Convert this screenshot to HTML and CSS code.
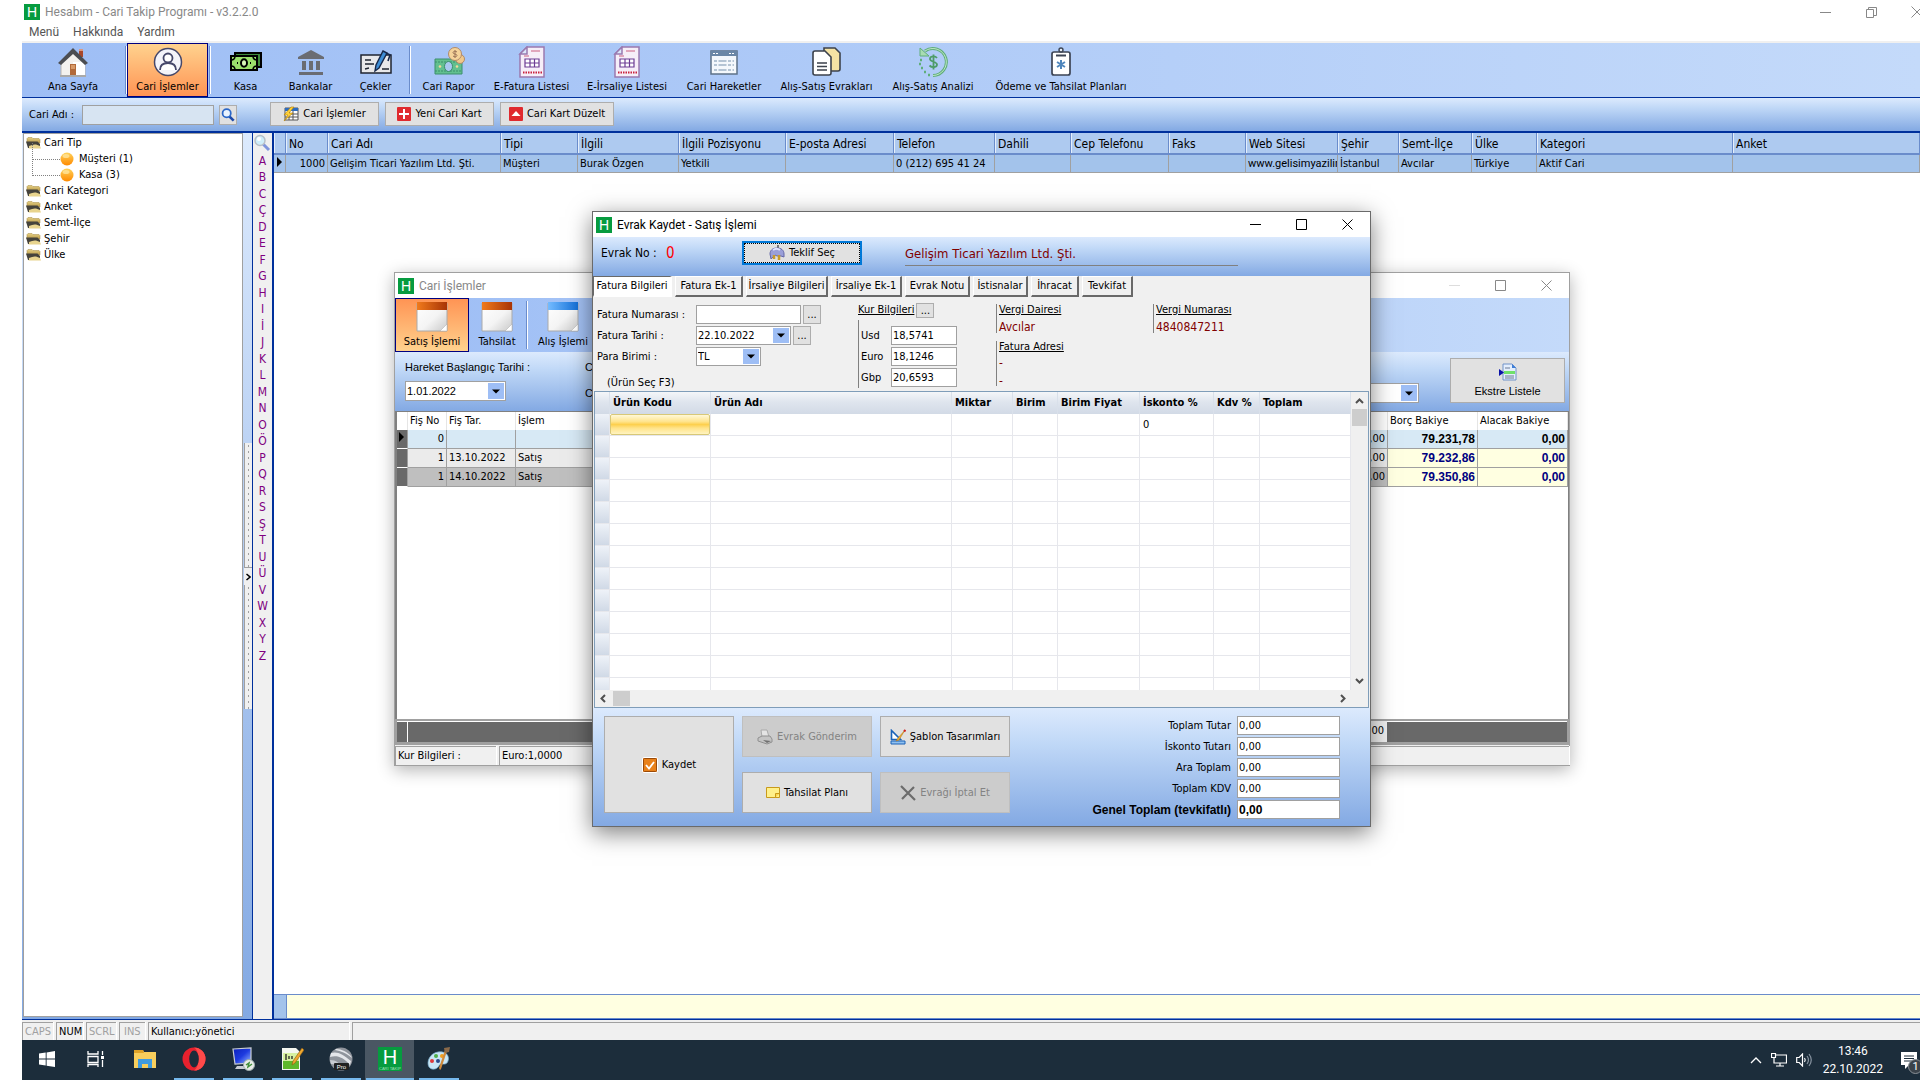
FILE: index.html
```html
<!DOCTYPE html>
<html lang="tr">
<head>
<meta charset="utf-8">
<title>Hesabım - Cari Takip Programı - v3.2.2.0</title>
<link rel="stylesheet" href="styles.css">
</head>
<body>
<svg class="defs" aria-hidden="true">
  <defs>
    <linearGradient id="sheet" x1="0" y1="0" x2="1" y2="1"><stop offset="0" stop-color="#fff"/><stop offset=".55" stop-color="#f4f4f4"/><stop offset="1" stop-color="#c9c9c9"/></linearGradient>
    <linearGradient id="orangeTop"><stop offset="0" stop-color="#f07a1c"/><stop offset="1" stop-color="#a83406"/></linearGradient>
    <linearGradient id="blueTop"><stop offset="0" stop-color="#74bbff"/><stop offset="1" stop-color="#1470d8"/></linearGradient>
    <linearGradient id="ball" x1="0" y1="0" x2="0" y2="1"><stop offset="0" stop-color="#ffd25a"/><stop offset="1" stop-color="#ff8a00"/></linearGradient>
    <linearGradient id="screen" x1="0" y1="0" x2="1" y2="1"><stop offset="0" stop-color="#0a1fb8"/><stop offset=".5" stop-color="#1d3be0"/><stop offset="1" stop-color="#9fc0ff"/></linearGradient>
    <linearGradient id="folderLid" x1="0" y1="0" x2="0" y2="1"><stop offset="0" stop-color="#e6cf83"/><stop offset="1" stop-color="#b89a4a"/></linearGradient>
  </defs>
  <symbol id="i-folder" viewBox="0 0 15 12"><path d="M1 1.500L2 .5h4l1 1h6l1 1V6H1z" fill="url(#folderLid)" stroke="#a58a45" stroke-width=".5"/><path d="M0 4.500h11.500L14 7v4H2z" fill="#45433c"/><path d="M3 11V9q4-2 7-1.500L14 9l1 2.500H2z" fill="#e8d48e"/></symbol>
  <symbol id="i-ball" viewBox="0 0 14 14"><circle cx="7" cy="7" r="6.500" fill="url(#ball)"/><ellipse cx="6" cy="4" rx="3.500" ry="2" fill="#ffe9a8" opacity=".7"/></symbol>
  <symbol id="i-doc" viewBox="0 0 28 32"><path d="M9 1h17v30H2V8z" fill="#f6eef8" stroke="#9a7ab0" stroke-width="1.500"/><path d="M9 1v7H2z" fill="#dbe8fa" stroke="#9a7ab0" stroke-width="1.500"/><path d="M13 5h9M6 10h5" stroke="#d98fa8" stroke-width="1.500"/><path d="M7 13h14v8H7zM7 17h14M12 13v8M16.500 13v8" fill="#fff" stroke="#6d3c94" stroke-width="1.200"/><path d="M5 26.500h19" stroke="#c9203c" stroke-width="2" stroke-dasharray="1.500 1"/></symbol>
  <symbol id="i-search" viewBox="0 0 16 16"><path d="M9.500 9.500l5 5" stroke="#1d49a8" stroke-width="3"/><circle cx="6.500" cy="6" r="4.700" fill="#eaf4ff" stroke="#2c68c8" stroke-width="2"/></symbol>
  <symbol id="i-caret" viewBox="0 0 8 5"><path d="M0 .5h8L4 4.500z" fill="#000"/></symbol>
</svg>

<div class="app">
  <header class="titlebar">
    <span class="logo">H</span>
    <h1 class="titlebar-text">Hesabım - Cari Takip Programı - v3.2.2.0</h1>
    <div class="win-buttons main-buttons">
      <button aria-label="Simge durumuna küçült"><svg width="11" height="11"><path d="M0 5.500h11" stroke="#888"/></svg></button>
      <button aria-label="Önceki boyut"><svg width="11" height="11"><path d="M.5 2.500h7v8h-7zM2.500 2.500v-2h8v8h-3" fill="none" stroke="#888"/></svg></button>
      <button aria-label="Kapat"><svg width="12" height="12"><path d="M.5.5l11 11M11.500.5l-11 11" stroke="#888"/></svg></button>
    </div>
  </header>
  <nav class="menu"><a href="#">Menü</a><a href="#">Hakkında</a><a href="#">Yardım</a></nav>

  <div class="toolbar">
    <button class="tool"><svg width="32" height="32" viewBox="0 0 32 32"><path d="M22 3h4v8h-4z" fill="#a8482c"/><path d="M22 3h4v2h-4z" fill="#d99a84"/><path d="M4 16L16 5l12 11v14H4z" fill="#f3f1ee" stroke="#b9b4ad"/><path d="M16 16h12v14H16z" fill="#fff"/><path d="M16 2L1 17l3 2L16 8l12 11 3-2z" fill="#4b4d52"/><path d="M13 18h6v12h-6z" fill="#b26a3a"/><path d="M14 19h4v4h-4z" fill="#d89a68"/><path d="M3 30h26" stroke="#a9a9a9" stroke-width="2"/></svg>Ana Sayfa</button>
    <i class="sep"></i>
    <button class="tool active"><svg width="32" height="32" viewBox="0 0 32 32"><circle cx="16" cy="16" r="13.500" fill="#f4f4fa" stroke="#46486a" stroke-width="1.500"/><circle cx="16" cy="12" r="4.500" fill="#fff" stroke="#46486a" stroke-width="1.800"/><path d="M8 24c0-5 3-7 8-7s8 2 8 7" fill="#fff" stroke="#46486a" stroke-width="1.800"/></svg>Cari İşlemler</button>
    <i class="sep"></i>
    <button class="tool"><svg width="32" height="32" viewBox="0 0 32 32"><path d="M5 7h26v14H5z" fill="#3f8a3c" stroke="#000" stroke-width="2"/><path d="M1 10h26v14H1z" fill="#9be06b" stroke="#000" stroke-width="2"/><path d="M1 14c3 0 4-2 4-4M27 14c-3 0-4-2-4-4M1 20c3 0 4 2 4 4M27 20c-3 0-4 2-4 4" fill="none" stroke="#000" stroke-width="1.500"/><ellipse cx="14" cy="17" rx="3" ry="3.800" fill="#d9f7b8" stroke="#000" stroke-width="2"/><path d="M7 17h1M20 17h1" stroke="#000" stroke-width="2"/></svg>Kasa</button>
    <button class="tool"><svg width="32" height="32" viewBox="0 0 32 32"><path d="M16 4l13 7v2H3v-2zM7 15h4v9H7zM14 15h4v9h-4zM21 15h4v9h-4zM4 26h24v3H4z" fill="#6a6c72"/></svg>Bankalar</button>
    <button class="tool"><svg width="34" height="32" viewBox="0 0 34 32"><path d="M2 9h30v18H2z" fill="#e8e8ea" stroke="#1f2430" stroke-width="1.500"/><path d="M6 14h6M6 18h9M23 23h7M6 23l4-1" stroke="#1f2430" stroke-width="1.300"/><path d="M24 5l4 2-8 15-4 3 1-6z" fill="#3f8ed6" stroke="#17284a" stroke-width="1.400"/><path d="M27 7l4 2-2 6" fill="none" stroke="#17284a" stroke-width="1.600"/></svg>Çekler</button>
    <i class="sep"></i>
    <button class="tool"><svg width="32" height="32" viewBox="0 0 32 32"><path d="M2 13h27v15H2z" fill="#62c08f" stroke="#3c8f6c"/><path d="M2 16h27M2 25h27" stroke="#3c8f6c" stroke-dasharray="2 1"/><ellipse cx="15.500" cy="20.500" rx="4" ry="5" fill="#a9c9f0" stroke="#3c8f6c"/><circle cx="7" cy="20.500" r="1.300" fill="#f2d79b"/><circle cx="24" cy="20.500" r="1.300" fill="#f2d79b"/><circle cx="27" cy="13" r="4.500" fill="#f0c88a" stroke="#b08a6a"/><circle cx="22" cy="8" r="6.500" fill="#f5d39a" stroke="#b08a6a"/><path d="M24 6c-1-1-4-1-4 .7s4 1 4 2.700-3 1.700-4 .600M22 4v8" fill="none" stroke="#9c7458"/></svg>Cari Rapor</button>
    <button class="tool"><svg width="28" height="32"><use href="#i-doc"/></svg>E-Fatura Listesi</button>
    <button class="tool"><svg width="28" height="32"><use href="#i-doc"/></svg>E-İrsaliye Listesi</button>
    <button class="tool"><svg width="30" height="32" viewBox="0 0 30 32"><path d="M2 5h26v23H2z" fill="#f4f8fc" stroke="#5d7288" stroke-width="1.500"/><path d="M2 5h26v5H2z" fill="#6b87a6"/><path d="M4 7.500h6M20 7.500h6" stroke="#fff" stroke-dasharray="2 1"/><path d="M5 15h20M5 19h20M5 24h20" stroke="#9fb2c6" stroke-width="1.400" stroke-dasharray="3 1.500 8 1.500"/></svg>Cari Hareketler</button>
    <button class="tool"><svg width="30" height="32" viewBox="0 0 30 32"><path d="M12 2h11l5 5v16q0 2-2 2H12z" fill="#f5e3a4" stroke="#3c424c" stroke-width="1.600"/><path d="M3 5h10l6 6v16q0 2-2 2H3q-2 0-2-2V7q0-2 2-2z" fill="#fff" stroke="#3c424c" stroke-width="1.600"/><path d="M5 17h10M5 20.500h10M5 24h10" stroke="#3c424c" stroke-width="1.500"/></svg>Alış-Satış Evrakları</button>
    <button class="tool"><svg width="32" height="32" viewBox="0 0 32 32"><path d="M8 5A13.500 13.500 0 1 1 16 29.500" fill="none" stroke="#5fae7a" stroke-width="3"/><path d="M8 5A13.500 13.500 0 1 1 16 29.500" fill="none" stroke="#bfe6c6" stroke-width="1"/><path d="M3 2v8h9z" fill="#a8dcb2" stroke="#5fae7a"/><path d="M3 14h2M2 18h2M4 22h2M7 26h2M11 29h2" stroke="#5fae7a" stroke-width="2.500"/><path d="M20 12c-2-2.500-7-2-7 1s7 2.500 7 5.500-5 3.500-7.500 1M16.500 8.500v15" fill="none" stroke="#4e9c69" stroke-width="1.800"/></svg>Alış-Satış Analizi</button>
    <button class="tool"><svg width="24" height="32" viewBox="0 0 24 32"><path d="M5 6h14q2 0 2 2v19q0 2-2 2H5q-2 0-2-2V8q0-2 2-2z" fill="#fff" stroke="#3c4454" stroke-width="1.700"/><path d="M7 9.500h10" stroke="#3c4454" stroke-width="2"/><circle cx="12" cy="4" r="2" fill="#e8eef6" stroke="#3c4454" stroke-width="1.400"/><path d="M12 14v9M8 16l8 5M16 16l-8 5" stroke="#4f86bd" stroke-width="2"/></svg>Ödeme ve Tahsilat Planları</button>
  </div>

  <div class="actionbar">
    <label for="cari-adi">Cari Adı :</label>
    <input id="cari-adi" class="search-box" type="text">
    <button class="btn search-btn" aria-label="Ara"><svg width="14" height="16"><use href="#i-search"/></svg></button>
    <div class="action-group">
      <button class="btn act-wide"><svg width="16" height="16" viewBox="0 0 16 16"><path d="M2 2h13v12H2z" fill="#fff" stroke="#555"/><path d="M2 2h13v3H2z" fill="#2c6cc0"/><path d="M6 5v9M10 5v9M2 8h13M2 11h13" stroke="#555"/><path d="M8 1L1 9h4l-4 6 9-8H6l5-6z" fill="#ffd23a" stroke="#b07a00" stroke-width=".600"/></svg>Cari İşlemler</button>
      <button class="btn act-wide"><svg width="14" height="14" viewBox="0 0 14 14"><rect width="14" height="14" rx="1" fill="#e02a2e"/><path d="M7 2v10M2 7h10" stroke="#fff" stroke-width="2"/></svg>Yeni Cari Kart</button>
      <button class="btn act-edit"><svg width="14" height="14" viewBox="0 0 14 14"><rect width="14" height="14" rx="1" fill="#e02a2e"/><path d="M7 4l4.500 5h-9z" fill="#fff"/></svg>Cari Kart Düzelt</button>
    </div>
  </div>

  <main class="workspace">
    <aside class="tree-wrap">
      <ul class="tree">
        <li><svg width="15" height="12"><use href="#i-folder"/></svg>Cari Tip
          <ul>
            <li><svg width="14" height="14"><use href="#i-ball"/></svg>Müşteri (1)</li>
            <li><svg width="14" height="14"><use href="#i-ball"/></svg>Kasa (3)</li>
          </ul>
        </li>
        <li><svg width="15" height="12"><use href="#i-folder"/></svg>Cari Kategori</li>
        <li><svg width="15" height="12"><use href="#i-folder"/></svg>Anket</li>
        <li><svg width="15" height="12"><use href="#i-folder"/></svg>Semt-İlçe</li>
        <li><svg width="15" height="12"><use href="#i-folder"/></svg>Şehir</li>
        <li><svg width="15" height="12"><use href="#i-folder"/></svg>Ülke</li>
      </ul>
      <div class="splitter"><i class="dots"></i><button class="split-btn" aria-label="Daralt"><svg width="5" height="8"><path d="M.5 1L4 4 .5 7" fill="none" stroke="#000" stroke-width="1.500"/></svg></button><i class="dots"></i></div>
    </aside>
    <nav class="alphabet">
      <svg class="alpha-search" width="18" height="18" viewBox="0 0 18 18"><path d="M10 10l6 6" stroke="#7f95dc" stroke-width="3"/><circle cx="7" cy="6.500" r="5" fill="#cfeefa" stroke="#b8c0c8" stroke-width="1.500"/><circle cx="6" cy="5" r="2" fill="#fff"/></svg>
      <div class="letters"><a href="#">A</a><a href="#">B</a><a href="#">C</a><a href="#">Ç</a><a href="#">D</a><a href="#">E</a><a href="#">F</a><a href="#">G</a><a href="#">H</a><a href="#">I</a><a href="#">İ</a><a href="#">J</a><a href="#">K</a><a href="#">L</a><a href="#">M</a><a href="#">N</a><a href="#">O</a><a href="#">Ö</a><a href="#">P</a><a href="#">Q</a><a href="#">R</a><a href="#">S</a><a href="#">Ş</a><a href="#">T</a><a href="#">U</a><a href="#">Ü</a><a href="#">V</a><a href="#">W</a><a href="#">X</a><a href="#">Y</a><a href="#">Z</a></div>
    </nav>
    <section class="records">
      <table class="cari-table">
        <colgroup><col class="c-ind"><col class="c-no"><col class="c-adi"><col class="c-tip"><col class="c-ilgili"><col class="c-poz"><col class="c-mail"><col class="c-tel"><col class="c-dahili"><col class="c-cep"><col class="c-faks"><col class="c-web"><col class="c-sehir"><col class="c-semt"><col class="c-ulke"><col class="c-kat"><col></colgroup>
        <thead><tr><th></th><th>No</th><th>Cari Adı</th><th>Tipi</th><th>İlgili</th><th>İlgili Pozisyonu</th><th>E-posta Adresi</th><th>Telefon</th><th>Dahili</th><th>Cep Telefonu</th><th>Faks</th><th>Web Sitesi</th><th>Şehir</th><th>Semt-İlçe</th><th>Ülke</th><th>Kategori</th><th>Anket</th></tr></thead>
        <tbody><tr><td class="ind"><svg width="6" height="10"><path d="M0 0l5 5-5 5z"/></svg></td><td class="num">1000</td><td>Gelişim Ticari Yazılım Ltd. Şti.</td><td>Müşteri</td><td>Burak Özgen</td><td>Yetkili</td><td></td><td>0 (212) 695 41 24</td><td></td><td></td><td></td><td class="web">www.gelisimyazilim</td><td>İstanbul</td><td>Avcılar</td><td>Türkiye</td><td>Aktif Cari</td><td></td></tr></tbody>
      </table>
      <div class="note-row"></div>
    </section>
  </main>

  <footer class="statusbar">
    <span class="st st-caps off">CAPS</span><span class="st st-num">NUM</span><span class="st st-scrl off">SCRL</span><span class="st st-ins off">INS</span><span class="st st-user">Kullanıcı:yönetici</span><span class="st st-rest"></span>
  </footer>
</div>

<section class="window cari-window">
  <header class="win-title"><span class="logo">H</span><h2>Cari İşlemler</h2>
    <div class="win-buttons">
      <button aria-label="Simge durumuna küçült"><svg width="11" height="11"><path d="M0 5.500h11" stroke="#ddd"/></svg></button>
      <button aria-label="Ekranı kapla"><svg width="11" height="11"><path d="M.5.5h10v10H.5z" fill="none" stroke="#888"/></svg></button>
      <button aria-label="Kapat"><svg width="11" height="11"><path d="M.5.5l10 10M10.500.5l-10 10" stroke="#888"/></svg></button>
    </div>
  </header>
  <div class="cari-tools">
    <button class="tool pressed"><svg width="32" height="32" viewBox="0 0 32 32"><path d="M1 2h30v28H1z" fill="url(#sheet)" stroke="#aaa"/><path d="M1 1h30v8H1z" fill="url(#orangeTop)"/><path d="M24 30l7-7v7z" fill="#fff" stroke="#aaa" stroke-width=".5"/></svg>Satış İşlemi</button>
    <button class="tool narrow"><svg width="32" height="32" viewBox="0 0 32 32"><path d="M1 2h30v28H1z" fill="url(#sheet)" stroke="#aaa"/><path d="M1 1h30v8H1z" fill="url(#orangeTop)"/><path d="M24 30l7-7v7z" fill="#fff" stroke="#aaa" stroke-width=".5"/></svg>Tahsilat</button>
    <i class="sep"></i>
    <button class="tool"><svg width="32" height="32" viewBox="0 0 32 32"><path d="M1 2h30v28H1z" fill="url(#sheet)" stroke="#aaa"/><path d="M1 1h30v8H1z" fill="url(#blueTop)"/><path d="M24 30l7-7v7z" fill="#fff" stroke="#aaa" stroke-width=".5"/></svg>Alış İşlemi</button>
  </div>
  <div class="cari-filter">
    <div class="filter-start">
      <label for="baslangic">Hareket Başlangıç Tarihi :</label>
      <span class="combo combo-start"><input id="baslangic" type="text" value="1.01.2022"><button class="drop" aria-label="Takvim"><svg width="8" height="5"><use href="#i-caret"/></svg></button></span>
    </div>
    <div class="filter-mid"><span>C</span><span>C</span></div>
    <span class="combo combo-mid"><select aria-label="Cari"><option></option></select><i class="drop"><svg width="8" height="5"><use href="#i-caret"/></svg></i></span>
    <button class="btn list-btn"><svg width="18" height="18" viewBox="0 0 18 18"><path d="M4 1h9l4 4v12H4z" fill="#e4eefc" stroke="#6f92c8"/><path d="M13 1v4h4z" fill="#3f7fd8"/><path d="M6 5h5M6 13h9M6 15h9" stroke="#6a7a94"/><path d="M5 8h11v3H5z" fill="#6fe06a"/><path d="M0 6v7l5-3.500z" fill="#0a12a8"/></svg>Ekstre Listele</button>
  </div>
  <div class="fis-area">
    <table class="fis-table">
      <colgroup><col class="f-ind"><col class="f-no"><col class="f-tar"><col><col class="f-amt"><col class="f-borc"><col class="f-alacak"></colgroup>
      <thead><tr><th></th><th>Fiş No</th><th>Fiş Tar.</th><th>İşlem</th><th></th><th>Borç Bakiye</th><th>Alacak Bakiye</th></tr></thead>
      <tbody>
        <tr class="r-current"><td class="mark"><svg width="6" height="10"><path d="M0 0l5 5-5 5z"/></svg></td><td class="num">0</td><td></td><td></td><td class="num">,00</td><td class="sum">79.231,78</td><td class="sum">0,00</td></tr>
        <tr class="r-light"><td class="mark"></td><td class="num">1</td><td>13.10.2022</td><td>Satış</td><td class="num">,00</td><td class="sum">79.232,86</td><td class="sum">0,00</td></tr>
        <tr class="r-dark"><td class="mark"></td><td class="num">1</td><td>14.10.2022</td><td>Satış</td><td class="num">,00</td><td class="sum">79.350,86</td><td class="sum">0,00</td></tr>
      </tbody>
    </table>
  </div>
  <div class="fis-footer"><span class="foot-ind"></span><span class="foot-fill"></span><span class="foot-sum">00</span><span class="foot-end"></span></div>
  <footer class="cari-status"><span class="st st-kur">Kur Bilgileri :</span><span class="st st-rest">Euro:1,0000</span></footer>
</section>

<section class="window evrak-window">
  <header class="win-title"><span class="logo">H</span><h2>Evrak Kaydet - Satış İşlemi</h2>
    <div class="win-buttons">
      <button aria-label="Simge durumuna küçült"><svg width="11" height="11"><path d="M0 5.500h11" stroke="#000"/></svg></button>
      <button aria-label="Ekranı kapla"><svg width="11" height="11"><path d="M.5.5h10v10H.5z" fill="none" stroke="#000"/></svg></button>
      <button aria-label="Kapat"><svg width="11" height="11"><path d="M.5.5l10 10M10.500.5l-10 10" stroke="#000"/></svg></button>
    </div>
  </header>
  <div class="evrak-head">
    <span class="evrak-label">Evrak No :</span><span class="evrak-no">0</span>
    <button class="btn teklif"><svg width="16" height="16" viewBox="0 0 16 16"><path d="M9 0v4" stroke="#777" stroke-width="2"/><path d="M1 9c0-4 3-6 7-6s7 2 7 6v3l-3-1H8l-2-1-4 4z" fill="#9a9fd8" stroke="#6468a8"/><path d="M4 5c2-1.500 5-1.500 7 0" stroke="#dfe2ff" stroke-width="2" fill="none"/><path d="M5 10v4M10 10v5" stroke="#c89a2a" stroke-width="2.500"/></svg>Teklif Seç</button>
    <span class="company">Gelişim Ticari Yazılım Ltd. Şti.</span>
  </div>
  <nav class="tabs">
    <button class="tab t-sel">Fatura Bilgileri</button><button class="tab t-ek">Fatura Ek-1</button><button class="tab t-irs">İrsaliye Bilgileri</button><button class="tab t-irsek">İrsaliye Ek-1</button><button class="tab t-not">Evrak Notu</button><button class="tab t-ist">İstisnalar</button><button class="tab t-ihr">İhracat</button><button class="tab t-tev">Tevkifat</button>
  </nav>
  <div class="evrak-form">
    <div class="form-main">
      <div class="row"><label for="fno">Fatura Numarası :</label><input id="fno" class="field fno" type="text"><button class="btn dots-btn" aria-label="Numara seç">...</button></div>
      <div class="row"><label for="ftar">Fatura Tarihi :</label><span class="combo combo-date"><input id="ftar" type="text" value="22.10.2022"><button class="drop" aria-label="Takvim"><svg width="8" height="5"><use href="#i-caret"/></svg></button></span><button class="btn dots-btn" aria-label="Tarih seç">...</button></div>
      <div class="row"><label for="pb">Para Birimi :</label><span class="combo combo-cur"><select id="pb"><option>TL</option></select><i class="drop"><svg width="8" height="5"><use href="#i-caret"/></svg></i></span></div>
      <p class="hint">(Ürün Seç F3)</p>
    </div>
    <div class="form-rates">
      <div class="rates-head"><u>Kur Bilgileri</u><button class="btn dots-btn low" aria-label="Kur seç">...</button></div>
      <div class="rates">
        <div class="row"><label for="usd">Usd</label><input id="usd" class="field rate" type="text" value="18,5741"></div>
        <div class="row"><label for="euro">Euro</label><input id="euro" class="field rate" type="text" value="18,1246"></div>
        <div class="row"><label for="gbp">Gbp</label><input id="gbp" class="field rate" type="text" value="20,6593"></div>
      </div>
    </div>
    <div class="form-tax">
      <div class="info"><u>Vergi Dairesi</u><span class="val">Avcılar</span></div>
      <div class="info info-addr"><u>Fatura Adresi</u><span class="val">-</span><span class="val">-</span></div>
    </div>
    <div class="form-taxno"><div class="info"><u>Vergi Numarası</u><span class="val">4840847211</span></div></div>
  </div>
  <div class="items">
    <div class="items-view">
      <table class="items-table">
        <colgroup><col class="u-ind"><col class="u-kod"><col><col class="u-mik"><col class="u-bir"><col class="u-fiy"><col class="u-isk"><col class="u-kdv"><col class="u-top"></colgroup>
        <thead><tr><th></th><th>Ürün Kodu</th><th>Ürün Adı</th><th>Miktar</th><th>Birim</th><th>Birim Fiyat</th><th>İskonto %</th><th>Kdv %</th><th>Toplam</th></tr></thead>
        <tbody>
          <tr><td></td><td class="edit"><i></i></td><td></td><td></td><td></td><td></td><td>0</td><td></td><td></td></tr>
          <tr><td></td><td></td><td></td><td></td><td></td><td></td><td></td><td></td><td></td></tr>
          <tr><td></td><td></td><td></td><td></td><td></td><td></td><td></td><td></td><td></td></tr>
          <tr><td></td><td></td><td></td><td></td><td></td><td></td><td></td><td></td><td></td></tr>
          <tr><td></td><td></td><td></td><td></td><td></td><td></td><td></td><td></td><td></td></tr>
          <tr><td></td><td></td><td></td><td></td><td></td><td></td><td></td><td></td><td></td></tr>
          <tr><td></td><td></td><td></td><td></td><td></td><td></td><td></td><td></td><td></td></tr>
          <tr><td></td><td></td><td></td><td></td><td></td><td></td><td></td><td></td><td></td></tr>
          <tr><td></td><td></td><td></td><td></td><td></td><td></td><td></td><td></td><td></td></tr>
          <tr><td></td><td></td><td></td><td></td><td></td><td></td><td></td><td></td><td></td></tr>
          <tr><td></td><td></td><td></td><td></td><td></td><td></td><td></td><td></td><td></td></tr>
          <tr><td></td><td></td><td></td><td></td><td></td><td></td><td></td><td></td><td></td></tr>
          <tr><td></td><td></td><td></td><td></td><td></td><td></td><td></td><td></td><td></td></tr>
        </tbody>
      </table>
      <div class="vscroll"><svg width="9" height="6"><path d="M1 5l3.500-3.500L8 5" fill="none" stroke="#505050" stroke-width="2"/></svg><i></i><svg class="to-end" width="9" height="6"><path d="M1 1l3.500 3.500L8 1" fill="none" stroke="#505050" stroke-width="2"/></svg></div>
    </div>
    <div class="hscroll"><svg width="6" height="9"><path d="M5 1L1.500 4.500 5 8" fill="none" stroke="#505050" stroke-width="2"/></svg><i></i><svg class="to-end" width="6" height="9"><path d="M1 1l3.500 3.500L1 8" fill="none" stroke="#505050" stroke-width="2"/></svg></div>
  </div>
  <div class="evrak-foot">
    <div class="foot-buttons">
      <button class="btn save"><svg width="16" height="16" viewBox="0 0 16 16"><rect x=".5" y=".5" width="15" height="15" rx="1.500" fill="#e8811a" stroke="#fff"/><rect x="1.500" y="1.500" width="13" height="13" rx="1" fill="none" stroke="#9a4a08"/><path d="M4 8l3 3.500L12 5" fill="none" stroke="#fff" stroke-width="1.800"/></svg>Kaydet</button>
      <button class="btn" disabled><svg width="16" height="16" viewBox="0 0 16 16"><path d="M4 1h6l2 7H5z" fill="#e4e4e4" stroke="#aaa"/><path d="M1 9l4-2h8l2 3v3l-5 2-9-3z" fill="#c4c4c4" stroke="#909090"/><path d="M6 11l8 1-4 2z" fill="#707070"/></svg>Evrak Gönderim</button>
      <button class="btn"><svg width="16" height="16" viewBox="0 0 16 16"><path d="M1.500 1.500v9h9z" fill="#fff" stroke="#1a62b8" stroke-width="1.600"/><path d="M1 12h14v3H1z" fill="#8fc0f0" stroke="#1a62b8"/><path d="M15 1L8 9l-2 3 3-1z" fill="#f0b030" stroke="#b07010" stroke-width=".5"/><path d="M14 1l1.500 1.500" stroke="#d02020" stroke-width="2"/></svg>Şablon Tasarımları</button>
      <button class="btn"><svg width="14" height="11" viewBox="0 0 14 11"><path d="M.5.5h13v10H.5z" fill="#fff08a" stroke="#c89a1c"/><path d="M9.500 10.500v-4h4" fill="#ffd84a" stroke="#c89a1c"/></svg>Tahsilat Planı</button>
      <button class="btn" disabled><svg width="16" height="16" viewBox="0 0 16 16"><path d="M1 1l14 14M14 2L2 14" stroke="#6c6c6c" stroke-width="2.200"/></svg>Evrağı İptal Et</button>
    </div>
    <div class="totals">
      <label for="t1">Toplam Tutar</label><input id="t1" class="field" type="text" value="0,00">
      <label for="t2">İskonto Tutarı</label><input id="t2" class="field" type="text" value="0,00">
      <label for="t3">Ara Toplam</label><input id="t3" class="field" type="text" value="0,00">
      <label for="t4">Toplam KDV</label><input id="t4" class="field" type="text" value="0,00">
      <label for="t5" class="grand">Genel Toplam (tevkifatlı)</label><input id="t5" class="field grand" type="text" value="0,00">
    </div>
  </div>
</section>

<div class="taskbar">
  <button class="task" aria-label="Başlat"><svg width="16" height="16" viewBox="0 0 16 16"><path d="M0 2.500l6.700-1v6H0zM7.600 1.400L16 0v7.500H7.600zM0 8.500h6.700v6L0 13.500zM7.600 8.500H16V16l-8.400-1.300z" fill="#fff"/></svg></button>
  <button class="task" aria-label="Görev görünümü"><svg width="18" height="16" viewBox="0 0 18 16"><path d="M1 0v3h10V0M1 5.500h10v6H1zM1 16v-2.500h10V16M15.500 0v4M15.500 9v7" fill="none" stroke="#fff" stroke-width="1.300"/><path d="M14 5h3v3h-3z" fill="#fff"/></svg></button>
  <button class="task" aria-label="Dosya Gezgini"><svg width="24" height="24" viewBox="0 0 24 24"><path d="M1 3h9l1 2h12v16H1z" fill="#f8ce5c"/><path d="M1 3h9l1 3H1z" fill="#dfa227"/><path d="M5 12h14v9h-4v-4H9v4H5z" fill="#3f9be0"/></svg></button>
  <button class="task open" aria-label="Opera"><svg width="24" height="24" viewBox="0 0 24 24"><circle cx="12" cy="12" r="11.500" fill="#e8212e"/><path d="M12 .5a11.500 11.500 0 0 1 0 23c6-3 6-20 0-23z" fill="#ff4a4a"/><ellipse cx="12" cy="12" rx="4.800" ry="8.500" fill="#1c2d3b"/></svg></button>
  <button class="task open" aria-label="Uzak Masaüstü"><svg width="24" height="24" viewBox="0 0 24 24"><path d="M2 2l18-1v15L4 17z" fill="url(#screen)" stroke="#c8cdd4" stroke-width="1.200"/><path d="M6 19h9l1 3H4z" fill="#c8cdd4"/><circle cx="18" cy="18" r="5.500" fill="#e8ece8" stroke="#9aa"/><path d="M15 18l3-2-1 4 4-3" fill="none" stroke="#3f8f3a" stroke-width="1.500"/></svg></button>
  <button class="task open" aria-label="Not düzenleyici"><svg width="24" height="24" viewBox="0 0 24 24"><path d="M2 1h14l4 4v18H2z" fill="#f4f6f0"/><path d="M3 6h16v16H3z" fill="#d6f0a0"/><path d="M3 14h16v8H3z" fill="#5fb82c"/><path d="M6 7v6M9 9v3M12 9v3" stroke="#222" stroke-width="1.300"/><path d="M22 1L13 14l-1 4 3-2L24 3z" fill="#f0a830" stroke="#8a5a10" stroke-width=".600"/></svg></button>
  <button class="task open" aria-label="Earth Pro"><svg width="24" height="24" viewBox="0 0 24 24"><circle cx="12" cy="12" r="11.500" fill="#8f949c"/><path d="M2 6c6-2 12 1 20 8l-1 4C14 10 8 8 1 10zM7 2c6 0 11 3 15 7l1 2C17 6 12 4 6 3z" fill="#e4e6ea"/><path d="M1 13c6 0 10 3 13 8l-4 2c-3-5-5-6-8-6z" fill="#c8ccd2"/><rect x="5" y="16" width="15" height="7" rx="1" fill="#222"/><text x="12.500" y="21.500" font-size="6" fill="#fff" text-anchor="middle" font-family="Liberation Sans, sans-serif">Pro</text></svg></button>
  <button class="task open current" aria-label="Hesabım"><svg width="24" height="24" viewBox="0 0 24 24"><path d="M0 0h24v24H0z" fill="#069b3f"/><text x="12" y="17" font-size="20" fill="#fff" text-anchor="middle" font-family="Liberation Sans, sans-serif">H</text><text x="12" y="23" font-size="4" fill="#9fe0b4" text-anchor="middle" font-family="Liberation Sans, sans-serif">CARI TAKIP</text></svg></button>
  <button class="task open" aria-label="Paint"><svg width="24" height="24" viewBox="0 0 24 24"><path d="M2 20C-1 15 3 6 11 5c7-1 12 3 10 9-1 4-5 3-7 3s-2 4-6 5c-3 .6-5-.5-6-2z" fill="#c9e6f5" stroke="#7ab0d0" stroke-width=".7"/><circle cx="5" cy="14" r="2" fill="#e03a3a"/><circle cx="9" cy="9" r="2" fill="#4fb04a"/><circle cx="15" cy="9" r="2" fill="#f0a020"/><circle cx="11" cy="14" r="2" fill="#2c4a8a"/><path d="M20 4l-6 18-1 1-1-2 6-18z" fill="#d08a3a"/><path d="M17 1l6-1-1 5-4 1z" fill="#8a6a4a"/></svg></button>
  <div class="tray">
    <svg width="12" height="8" viewBox="0 0 12 8"><path d="M1 7l5-5 5 5" fill="none" stroke="#fff" stroke-width="1.300"/></svg>
    <svg width="16" height="14" viewBox="0 0 16 14"><path d="M5 2h10.500v8H3V5M9 10v3M5 13h8M.5.5h4v4h-4z" fill="none" stroke="#fff" stroke-width="1.200"/></svg>
    <svg width="16" height="14" viewBox="0 0 16 14"><path d="M.7 4.500h2.500L6.500 1v12L3.200 9.500H.7z" fill="none" stroke="#fff" stroke-width="1.200"/><path d="M8.500 5q1.500 2 0 4" fill="none" stroke="#fff" stroke-width="1.200"/><path d="M11 3q3 4 0 8M13 1q4.500 6 0 12" fill="none" stroke="#8793a0" stroke-width="1.200"/></svg>
    <div class="clock"><span>13:46</span><span>22.10.2022</span></div>
    <div class="notice"><svg width="16" height="17" viewBox="0 0 16 17"><path d="M0 0h16v13H8l-4 4v-4H0z" fill="#fff"/><path d="M3 4h10M3 6.500h10M3 9h10" stroke="#1c2d3b"/></svg><span class="badge">1</span></div>
  </div>
</div>
</body>
</html>
```

FILE: styles.css
```css
:root {
  --ui: "DejaVu Sans Condensed", "DejaVu Sans", sans-serif;
  --caption: Roboto, "Noto Sans", sans-serif;
  --classic: "Liberation Sans", Arial, sans-serif;
  --navy: #00309c;
  --face: #f0f0f0;
  --band: linear-gradient(#dceafd, #c0d8f7 30%, #83a9e3);
  --strip: linear-gradient(90deg, #9ebef5, #c4dafa);
}

* { box-sizing: border-box; }

body {
  margin: 0;
  height: 100vh;
  display: flex;
  flex-direction: column;
  padding-left: 22px;
  overflow: hidden;
  background: #fff;
  color: #000;
  font: 11px/14px var(--ui);
}

button, input, select { font: inherit; color: inherit; margin: 0; padding: 0; border: 0; border-radius: 0; }
button { background: none; white-space: nowrap; }
button svg { flex: none; }
h1, h2, p, ul { margin: 0; padding: 0; }
table { border-collapse: separate; border-spacing: 0; table-layout: fixed; width: 100%; }
th, td { padding: 0; overflow: hidden; white-space: nowrap; text-align: left; font-weight: normal; }
.defs { position: absolute; width: 0; height: 0; }

.app { flex: 1; min-height: 0; display: flex; flex-direction: column; }

/* captions */
.logo {
  width: 16px; height: 16px; flex: none;
  background: #069b3f; color: #fff;
  font: 14px/16px var(--classic); text-align: center;
}
.titlebar { height: 24px; display: flex; align-items: center; padding-left: 2px; gap: 5px; color: #888; }
.titlebar-text { font: 12px/16px var(--caption); flex: 1; }
.win-buttons { display: flex; }
.win-buttons button { width: 46px; height: 22px; display: flex; align-items: center; justify-content: center; }
.main-buttons { margin-right: -20px; }
.menu { height: 17px; display: flex; gap: 14px; padding-left: 7px; font: 12px/17px var(--caption); }
.menu a { color: #555; text-decoration: none; }

/* main tool strip */
.toolbar {
  height: 57px;
  border-top: 2px solid var(--face);
  border-bottom: 1px solid var(--navy);
  background: var(--strip);
  display: grid;
  grid-template-columns: 102px 3px 81px 5px 65px 65px 65px 5px 71px 95px 96px 98px 107px 106px 150px;
}
.tool { display: flex; flex-direction: column; align-items: center; gap: 2px; padding-top: 2px; line-height: 14px; border: 1px solid transparent; }
.tool.active { border-color: #000080; background: linear-gradient(#ffd28e, #ff9454); }
.tool.pressed { border-color: #000080; background: linear-gradient(#ff9454, #ffd28e); }
.sep { margin: 3px 1px; width: 1px; background: #6a8ccb; box-shadow: 1px 0 #fff; }

.actionbar {
  height: 35px; background: var(--band); border-bottom: 2px solid var(--navy);
  display: flex; align-items: center; padding-left: 7px;
}
.actionbar label { width: 53px; }
.search-box { width: 132px; height: 20px; background: #d7e4f2; border: 1px solid #a0a0a0; }
.btn {
  background: #e1e1e1; border: 1px solid #adadad;
  display: flex; align-items: center; justify-content: center; gap: 4px;
}
.btn:disabled { background: #ccc; border-color: #bfbfbf; color: #838383; }
.search-btn { width: 18px; height: 20px; margin-left: 5px; }
.action-group { display: flex; gap: 6px; margin-left: 33px; padding-bottom: 2px; }
.action-group .btn { height: 24px; }
.act-wide { width: 109px; }
.act-edit { width: 114px; }

/* workspace */
.workspace { flex: 1; min-height: 0; display: flex; border-bottom: 1px solid var(--navy); }
.tree-wrap { width: 230px; flex: none; display: flex; background: linear-gradient(#dceafd, #83a9e3); padding-left: 1px; }
.tree { flex: 1; list-style: none; background: #fff; border: 1px solid #a0a0a0; padding: 1px 2px; margin-bottom: 2px; line-height: 16px; }
.tree svg { vertical-align: middle; margin-right: 3px; }
.tree ul { list-style: none; margin-left: 6px; }
.tree ul li { display: flex; align-items: center; height: 16px; }
.tree ul li svg { margin-right: 5px; }
.tree ul li::before { content: ""; width: 27px; height: 16px; margin-top: -16px; border-left: 1px dotted #808080; border-bottom: 1px dotted #808080; }
.splitter { width: 9px; display: flex; flex-direction: column; align-items: stretch; padding: 310px 0 0 1px; }
.dots {
  height: 124px; flex: none; background: radial-gradient(circle, #a0a0a0 1px, transparent 1px) 1px 0 / 5px 6px repeat-y, var(--face);
  border-left: 1px solid #a0a0a0;
}
.split-btn { height: 18px; background: var(--face); border-top: 1px solid #a0a0a0; display: flex; align-items: center; justify-content: center; flex: none; }

.alphabet { width: 22px; flex: none; background: var(--face); border: solid var(--navy); border-width: 0 2px 0 1px; }
.alpha-search { display: block; height: 20px; }
.letters { height: 511px; display: flex; flex-direction: column; }
.letters a { flex: 1; color: #800080; text-decoration: none; text-align: center; font: 12px/16px var(--ui); }

.records { flex: 1; min-width: 0; display: flex; flex-direction: column; }
.cari-table th { height: 22px; padding: 2px 0 0 3px; font-size: 12px; background: #aecaf0; border-bottom: 2px solid #6a8ccb; border-right: 1px solid #6a8ccb; box-shadow: inset 1px 0 #e4eefb; }
.cari-table td { height: 18px; padding: 1px 0 0 2px; background: #a3c3eb; border-bottom: 1px solid #a0a0a0; border-right: 1px solid #a0a0a0; }
.cari-table .num { text-align: right; padding-right: 2px; }
.cari-table .ind { padding: 0 0 0 3px; }
.c-ind { width: 12px; } .c-no { width: 42px; } .c-adi { width: 173px; } .c-tip { width: 77px; }
.c-ilgili { width: 101px; } .c-poz { width: 107px; } .c-mail { width: 108px; } .c-tel { width: 101px; }
.c-dahili { width: 76px; } .c-cep { width: 98px; } .c-faks { width: 77px; } .c-web { width: 92px; }
.c-sehir { width: 61px; } .c-semt { width: 73px; } .c-ulke { width: 65px; } .c-kat { width: 196px; }
.cari-table .web { font-family: var(--caption); }
.note-row { height: 25px; margin-top: auto; background: #ffffe1; border: solid #6a8ccb; border-width: 1px 0; box-shadow: inset 12px 0 #a3c3eb, inset 13px 0 #6a8ccb; }

.statusbar { height: 20px; background: var(--face); display: flex; gap: 3px; padding-top: 2px; }
.st { border: solid #a0a0a0; border-width: 1px 0 0 1px; box-shadow: 1px 0 #fff; padding-left: 2px; line-height: 17px; white-space: nowrap; overflow: hidden; }
.off { color: #a0a0a0; }
.st-caps { width: 31px; } .st-num { width: 27px; } .st-scrl { width: 30px; } .st-ins { width: 26px; padding-left: 4px; }
.st-user { width: 201px; } .st-rest { flex: 1; } .st-kur { width: 101px; }

/* floating windows */
.window { position: absolute; background: var(--face); display: flex; flex-direction: column; }
.win-title { height: 25px; flex: none; background: #fff; display: flex; align-items: center; padding-left: 3px; gap: 5px; }
.win-title h2 { font: 12px/16px var(--caption); flex: 1; }

.cari-window { left: 394px; top: 272px; width: 1176px; border: 1px solid #a0a0a0; box-shadow: 0 4px 16px rgba(0, 0, 0, .3); }
.cari-window .win-title { color: #888; }
.cari-tools { height: 54px; background: var(--strip); display: flex; }
.cari-tools .tool { width: 70px; }
.cari-tools .pressed { width: 74px; }
.cari-tools .narrow { width: 56px; }
.cari-filter { height: 59px; background: var(--band); display: flex; padding: 6px 4px 8px 10px; font-family: var(--classic); }
.filter-start { width: 180px; display: flex; flex-direction: column; gap: 7px; padding-top: 2px; }
.filter-mid { display: flex; flex-direction: column; gap: 12px; padding-top: 2px; flex: 1; }
.combo { display: flex; background: #fff; border: 1px solid #a0a0a0; height: 20px; padding: 1px; }
.combo input, .combo select { flex: 1; min-width: 0; background: none; appearance: none; outline: 0; }
.drop { width: 16px; flex: none; background: #9ebef5; display: flex; align-items: center; justify-content: center; }
.combo-start { width: 101px; }
.combo-mid { width: 101px; align-self: flex-end; margin-right: 31px; }
.list-btn { width: 115px; flex-direction: column; gap: 3px; }
.fis-area { height: 308px; background: #fff; border: solid #808080; border-width: 1px 1px 0 2px; }
.f-ind { width: 11px; } .f-no { width: 39px; } .f-tar { width: 69px; } .f-amt { width: 66px; } .f-borc { width: 90px; } .f-alacak { width: 90px; }
.fis-table th { height: 18px; padding-left: 2px; border-right: 1px solid #e5e5e5; }
.fis-table td { height: 19px; padding-left: 2px; border-right: 1px solid #a0a0a0; border-bottom: 1px solid #a0a0a0; }
.fis-table .num, .fis-table .sum { text-align: right; padding-right: 2px; }
.fis-table .sum { font: bold 12px/14px var(--classic); color: #000080; background: #ffffe1; }
.r-current td, .fis-table .r-current td.sum { background: #d7e9f5; }
.fis-table .r-current td.sum { color: #000; }
.r-light td { background: #ebebeb; }
.r-dark td { background: #bfbfbf; }
.fis-table td.mark { background: #696969; border-bottom-color: #fff; }
.fis-footer { height: 26px; display: flex; background: #696969; border: solid #a0a0a0; border-width: 2px 2px 3px; box-shadow: inset 0 1px #fff; }
.foot-ind { width: 11px; border-right: 1px solid #fff; }
.foot-fill { flex: 1; }
.foot-sum { width: 30px; background: var(--face); text-align: right; padding-right: 3px; line-height: 20px; }
.foot-end { width: 180px; }
.cari-status { height: 20px; display: flex; gap: 3px; padding-top: 1px; }

.evrak-window { left: 592px; top: 211px; width: 779px; border: 1px solid #6a6a6a; box-shadow: 0 6px 22px rgba(0, 0, 0, .5); }
.evrak-head { height: 39px; background: var(--band); display: flex; align-items: flex-start; padding: 4px 8px; }
.evrak-label { font-size: 12px; line-height: 24px; width: 65px; }
.evrak-no { font: 15px/24px var(--ui); color: #f00; width: 76px; }
.teklif { width: 120px; height: 24px; border: 2px solid #0078d7; outline: 1px dotted #000; outline-offset: -3px; }
.company { width: 333px; margin: 2px 0 0 43px; font-size: 13px; line-height: 22px; color: #800000; border-bottom: 1px solid #808080; }
.tabs { height: 21px; display: flex; gap: 3px; }
.tab { background: var(--face); border: solid; border-width: 1px 2px 2px 1px; border-color: #fff #696969 #696969 #fff; text-align: center; }
.t-sel { background: #fff; border-color: #696969 #fff #fff #696969; width: 79px; }
.t-ek { width: 68px; } .t-irs { width: 82px; } .t-irsek { width: 71px; } .t-not { width: 65px; }
.t-ist { width: 55px; } .t-ihr { width: 48px; } .t-tev { width: 51px; }

.evrak-form { height: 94px; display: flex; }
.form-main { width: 265px; padding: 8px 0 0 4px; display: flex; flex-direction: column; gap: 2px; }
.row { display: flex; align-items: center; gap: 2px; height: 19px; }
.form-main label { width: 97px; }
.field { height: 19px; background: #fff; border: 1px solid #a0a0a0; padding-left: 1px; }
.row .combo { height: 19px; }
.fno { width: 105px; }
.combo-date { width: 95px; }
.combo-cur { width: 65px; }
.dots-btn { width: 18px; height: 19px; }
.dots-btn.low { height: 15px; line-height: 10px; }
.hint { padding: 8px 0 0 10px; }
.form-rates { width: 138px; padding-top: 6px; }
.rates-head { display: flex; gap: 2px; height: 15px; line-height: 13px; }
.rates { margin-top: 2px; border-left: 1px solid #808080; padding: 6px 0 1px 2px; display: flex; flex-direction: column; gap: 2px; }
.rates label { width: 28px; }
.rate { width: 66px; }
.form-tax { width: 157px; padding-top: 7px; }
.form-taxno { padding-top: 7px; }
.info { border-left: 1px solid #808080; padding-left: 2px; display: flex; flex-direction: column; height: 29px; line-height: 11px; gap: 6px; }
.info-addr { margin-top: 8px; height: 45px; gap: 5px; }
.val { font-size: 12px; line-height: 13px; color: #800000; }

.items { margin: 0 1px; border: 1px solid #7f9db9; background: #fff; }
.items-view { height: 298px; display: flex; overflow: hidden; }
.items-table { flex: 1; min-width: 0; align-self: flex-start; }
.u-ind { width: 15px; } .u-kod { width: 101px; } .u-mik { width: 61px; } .u-bir { width: 45px; }
.u-fiy { width: 82px; } .u-isk { width: 74px; } .u-kdv { width: 46px; } .u-top { width: 91px; }
.items-table th { height: 22px; padding-left: 3px; font-weight: bold; background: linear-gradient(#f4f6f9, #dfe5ee 45%, #d2dae6); border-right: 1px solid #d9e0ea; }
.items-table td { height: 22px; padding-left: 3px; border: solid #e6e7ec; border-width: 0 1px 1px 0; }
.items-table td:first-child { background: linear-gradient(#eef2f8, #d0d9e6); }
.items-table .edit { padding: 0; }
.edit i { display: block; height: 21px; border: 1px solid #d8c878; border-radius: 2px; background: linear-gradient(#fff8d8, #ffe48c 35%, #fdd04e 50%, #ffe48c 70%, #fff4c0); }
.vscroll { width: 17px; background: var(--face); display: flex; flex-direction: column; align-items: center; gap: 5px; padding: 6px 0; }
.vscroll i { width: 15px; height: 17px; background: #cdcdcd; }
.vscroll .to-end { margin-top: auto; }
.hscroll { height: 17px; background: var(--face); display: flex; align-items: center; gap: 7px; padding: 0 22px 1px 5px; }
.hscroll i { width: 17px; height: 15px; background: #cdcdcd; }
.hscroll .to-end { margin-left: auto; }

.evrak-foot { height: 118px; background: var(--band); display: flex; justify-content: space-between; padding: 8px 30px 0 11px; }
.foot-buttons { display: grid; grid-template-columns: 130px 130px 130px; grid-template-rows: 41px 41px; gap: 15px 8px; }
.save { grid-row: 1 / 3; }
.totals { display: grid; grid-template-columns: auto 103px; grid-auto-rows: 19px; gap: 2px 6px; align-items: center; text-align: right; }
.totals .grand { font: bold 12px/14px var(--classic); }

/* taskbar */
.taskbar { height: 40px; flex: none; background: #1c2d3b; display: flex; color: #fff; }
.task { width: 49px; display: flex; align-items: center; justify-content: center; border-bottom: 2px solid transparent; background-clip: padding-box; }
.task.open { background: linear-gradient(#76b9ed, #76b9ed) 50% 100% / 40px 2px no-repeat border-box; }
.task.current { background: linear-gradient(#76b9ed, #76b9ed) 50% 100% / 48px 2px no-repeat border-box, #4a5763; }
.tray { margin-left: auto; display: flex; align-items: center; gap: 9px; font: 12px/18px var(--caption); }
.clock { display: flex; flex-direction: column; text-align: center; margin-left: 2px; }
.notice { width: 19px; height: 17px; margin-left: 9px; position: relative; }
.badge { position: absolute; left: 7px; top: 7px; width: 15px; height: 15px; border-radius: 8px; background: #3a424a; border: 1px solid #8a9096; line-height: 13px; font-size: 11px; text-align: center; }
```
